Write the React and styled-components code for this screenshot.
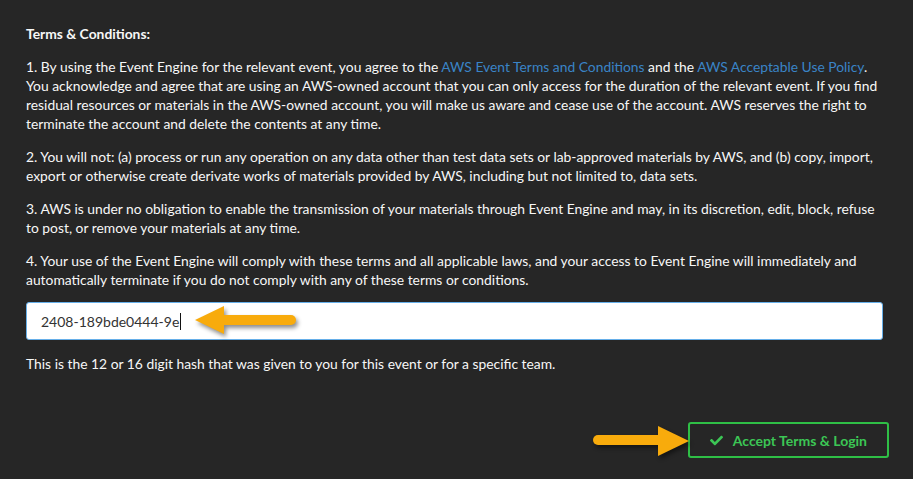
import React from 'react';
import styled, { createGlobalStyle } from 'styled-components';
import { FaCheck } from 'react-icons/fa';

const GlobalStyle = createGlobalStyle`
  html, body {
    margin: 0;
    padding: 0;
    background: #262626;
  }
  body {
    font-family: Lato, "Open Sans", sans-serif;
  }
`;

const Page = styled.div`
  min-height: 479px;
  box-sizing: border-box;
  padding: 24px 26px 20px 26px;
  color: #f7f7f7;
  font-size: 13.85px;
  line-height: 19px;
`;

const Title = styled.p`
  margin: 0 0 14px 0;
  font-weight: 700;
`;

const Para = styled.p`
  margin: 0 0 14px 0;
`;

const TermsLink = styled.a`
  color: #3a84c6;
  text-decoration: none;
`;

const FieldWrap = styled.div`
  position: relative;
  margin-top: -1px;
`;

const HashField = styled.div`
  box-sizing: border-box;
  height: 38px;
  display: flex;
  align-items: center;
  padding: 0 14px;
  background: #fff;
  border: 1px solid #66afe9;
  border-radius: 3px;
  color: #333;
  font-size: 14px;
  margin-right: 4px;
`;

const Caret = styled.span`
  display: inline-block;
  width: 1px;
  height: 17px;
  background: #111;
  margin-left: 1px;
`;

const Hint = styled.p`
  margin: 14px 0 0 0;
`;

const ActionRow = styled.div`
  position: relative;
  display: flex;
  justify-content: flex-end;
  margin-top: 49px;
`;

const AcceptButton = styled.button`
  display: flex;
  align-items: center;
  gap: 10px;
  box-sizing: border-box;
  height: 36px;
  padding: 0 20px;
  margin-right: -2px;
  background: transparent;
  border: 2px solid #2fbf46;
  border-radius: 3px;
  color: #3cc655;
  font-family: Lato, "Open Sans", sans-serif;
  font-size: 14px;
  font-weight: 700;
  cursor: pointer;

  svg {
    font-size: 13px;
  }
`;

const Pointer = styled.svg`
  position: absolute;
  overflow: visible;
  filter: drop-shadow(2px 3px 2px rgba(0, 0, 0, 0.45));
`;

const ARROW = '#f8ab0c';

const App = () => {
  return (
    <Page>
      <GlobalStyle />
      <Title>Terms &amp; Conditions:</Title>
      <Para>
        1. By using the Event Engine for the relevant event, you agree to the{' '}
        <TermsLink href="#">AWS Event Terms and Conditions</TermsLink> and the{' '}
        <TermsLink href="#">AWS Acceptable Use Policy</TermsLink>. You acknowledge and agree
        that are using an AWS-owned account that you can only access for the duration of the
        relevant event. If you find residual resources or materials in the AWS-owned account,
        you will make us aware and cease use of the account. AWS reserves the right to
        terminate the account and delete the contents at any time.
      </Para>
      <Para>
        2. You will not: (a) process or run any operation on any data other than test data sets
        or lab-approved materials by AWS, and (b) copy, import, export or otherwise create
        derivate works of materials provided by AWS, including but not limited to, data sets.
      </Para>
      <Para>
        3. AWS is under no obligation to enable the transmission of your materials through Event
        Engine and may, in its discretion, edit, block, refuse to post, or remove your materials
        at any time.
      </Para>
      <Para>
        4. Your use of the Event Engine will comply with these terms and all applicable laws, and
        your access to Event Engine will immediately and automatically terminate if you do not
        comply with any of these terms or conditions.
      </Para>
      <FieldWrap>
        <HashField>
          2408-189bde0444-9e<Caret />
        </HashField>
        <Pointer width="110" height="40" viewBox="0 0 110 40" style={{ left: 165, top: 0 }}>
          <line x1="32" y1="18" x2="100" y2="18" stroke={ARROW} strokeWidth="10" strokeLinecap="round" />
          <polygon points="4,18 33,4 33,32" fill={ARROW} />
        </Pointer>
      </FieldWrap>
      <Hint>This is the 12 or 16 digit hash that was given to you for this event or for a specific team.</Hint>
      <ActionRow>
        <Pointer width="105" height="40" viewBox="0 0 105 40" style={{ left: 560, top: 0 }}>
          <line x1="12" y1="18" x2="74" y2="18" stroke={ARROW} strokeWidth="10" strokeLinecap="round" />
          <polygon points="72,4 103,19 72,34" fill={ARROW} />
        </Pointer>
        <AcceptButton>
          <FaCheck />
          Accept Terms &amp; Login
        </AcceptButton>
      </ActionRow>
    </Page>
  );
};

export default App;
